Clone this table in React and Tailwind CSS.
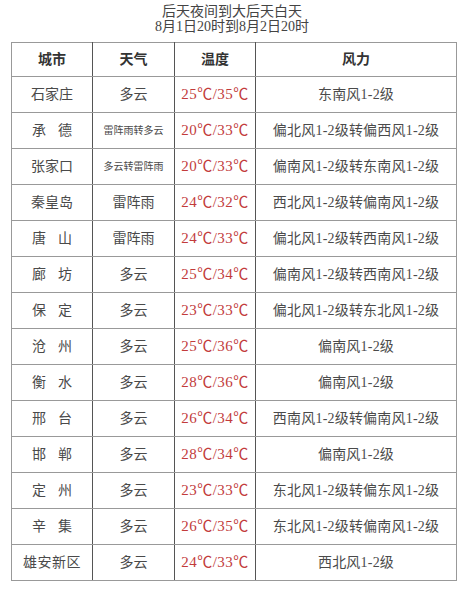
// Weather forecast table - Hebei cities

const rows = [
  ['石家庄', '多云', '25℃/35℃', '东南风1-2级'],
  ['承德', '雷阵雨转多云', '20℃/33℃', '偏北风1-2级转偏西风1-2级'],
  ['张家口', '多云转雷阵雨', '20℃/33℃', '偏南风1-2级转东南风1-2级'],
  ['秦皇岛', '雷阵雨', '24℃/32℃', '西北风1-2级转偏南风1-2级'],
  ['唐山', '雷阵雨', '24℃/33℃', '偏北风1-2级转西南风1-2级'],
  ['廊坊', '多云', '25℃/34℃', '偏南风1-2级转西南风1-2级'],
  ['保定', '多云', '23℃/33℃', '偏北风1-2级转东北风1-2级'],
  ['沧州', '多云', '25℃/36℃', '偏南风1-2级'],
  ['衡水', '多云', '28℃/36℃', '偏南风1-2级'],
  ['邢台', '多云', '26℃/34℃', '西南风1-2级转偏南风1-2级'],
  ['邯郸', '多云', '28℃/34℃', '偏南风1-2级'],
  ['定州', '多云', '23℃/33℃', '东北风1-2级转偏东风1-2级'],
  ['辛集', '多云', '26℃/35℃', '东北风1-2级转偏南风1-2级'],
  ['雄安新区', '多云', '24℃/33℃', '西北风1-2级'],
]

function City({ name }) {
  if (name.length === 2) {
    return (
      <div className="mx-auto flex w-[40px] justify-between">
        <span>{name[0]}</span>
        <span>{name[1]}</span>
      </div>
    )
  }
  if (name.length === 4) {
    return <span className="tracking-[0.5px]">{name}</span>
  }
  return <span>{name}</span>
}

export default function App() {
  return (
    <div
      className="w-[464px] h-[600px] bg-white text-[#4a4a4a]"
      style={{ fontFamily: '"Liberation Serif", "Noto Sans CJK SC", serif' }}
    >
      {/* Title */}
      <div className="pt-[4px] text-center text-[14px] leading-[15px] text-[#444]">
        <p>后天夜间到大后天白天</p>
        <p>8月1日20时到8月2日20时</p>
      </div>

      {/* Table */}
      <table className="ml-[11px] mt-[8px] w-[445px] table-fixed border-collapse">
        <colgroup>
          <col className="w-[81px]" />
          <col className="w-[82px]" />
          <col className="w-[81px]" />
          <col className="w-[201px]" />
        </colgroup>
        <thead>
          <tr className="h-[34px] text-[14px] font-bold text-[#333]">
            <th className="border border-[#999] border-r-[#555]">城市</th>
            <th className="border border-[#999] border-r-[#555]">天气</th>
            <th className="border border-[#999] border-r-[#555]">温度</th>
            <th className="border border-[#999]">风力</th>
          </tr>
        </thead>
        <tbody>
          {rows.map((r, i) => (
            <tr key={i} className="h-[36px] text-center text-[14px]">
              <td className="border border-[#999] border-r-[#555]">
                <City name={r[0]} />
              </td>
              <td
                className={
                  r[1].length > 3
                    ? 'border border-[#999] border-r-[#555] text-[10px]'
                    : 'border border-[#999] border-r-[#555]'
                }
              >
                {r[1]}
              </td>
              <td className="border border-[#999] border-r-[#555] text-[15px] text-[#c23b3b] tracking-[0.5px]">
                {r[2]}
              </td>
              <td className="border border-[#999] text-[14px] tracking-[0.2px]">{r[3]}</td>
            </tr>
          ))}
        </tbody>
      </table>
    </div>
  )
}
